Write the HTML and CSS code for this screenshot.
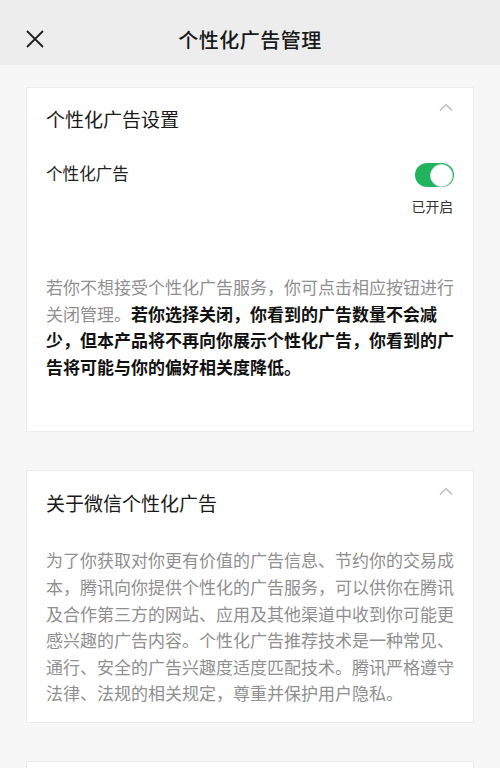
FILE: index.html
```html
<!DOCTYPE html>
<html lang="zh-CN">
<head>
<meta charset="UTF-8">
<title>个性化广告管理</title>
<link rel="stylesheet" href="styles.css">
</head>
<body>
<div class="topbar">
    <svg class="close" width="18" height="18" viewBox="0 0 18 18"><path d="M1 1L17 17M17 1L1 17" stroke="#1f1f1f" stroke-width="1.8" fill="none"/></svg>
    <h1>个性化广告管理</h1>
</div>

<div class="card first">
    <div class="card-hd">
        <h2>个性化广告设置</h2>
        <svg class="arrow" width="14" height="8" viewBox="0 0 14 8"><path d="M1 7.5L7 1.5L13 7.5" stroke="#b5b5b5" stroke-width="1.2" fill="none"/></svg>
    </div>
    <div class="row">
        <span class="label">个性化广告</span>
        <div class="state">
            <span class="switch on"><i></i></span>
            <span class="state-txt">已开启</span>
        </div>
    </div>
    <p class="desc">若你不想接受个性化广告服务，你可点击相应按钮进行关闭管理。<b>若你选择关闭，你看到的广告数量不会减少，但本产品将不再向你展示个性化广告，你看到的广告将可能与你的偏好相关度降低。</b></p>
</div>

<div class="card second">
    <div class="card-hd">
        <h2>关于微信个性化广告</h2>
        <svg class="arrow" width="14" height="8" viewBox="0 0 14 8"><path d="M1 7.5L7 1.5L13 7.5" stroke="#b5b5b5" stroke-width="1.2" fill="none"/></svg>
    </div>
    <p class="desc">为了你获取对你更有价值的广告信息、节约你的交易成本，腾讯向你提供个性化的广告服务，可以供你在腾讯及合作第三方的网站、应用及其他渠道中收到你可能更感兴趣的广告内容。个性化广告推荐技术是一种常见、通行、安全的广告兴趣度适度匹配技术。腾讯严格遵守法律、法规的相关规定，尊重并保护用户隐私。</p>
</div>

<div class="card third"></div>
</body>
</html>
```

FILE: styles.css
```css
body{margin:0;background:#f7f7f7;font-family:"Noto Sans CJK SC","Noto Sans",sans-serif;color:#1a1a1a;}
h1,h2,p{margin:0;}
.topbar{
    position:relative;
    height:65px;
    background:#ededed;
    display:flex;
    align-items:center;
    justify-content:center;
}
.topbar .close{
    position:absolute;
    left:26px;
    top:30px;
}
.topbar h1{
    font-size:20px;
    font-weight:500;
    color:#191919;
    letter-spacing:0.5px;
    margin-top:14px;
}
.card{
    margin:22px 26px 0;
    background:#fff;
    border:1px solid #ececec;
    padding:0 19px;
}
.card.first{padding-top:18px;padding-bottom:51px;}
.card.second{margin-top:38px;padding-top:19px;padding-bottom:15px;}
.card.third{margin-top:38px;height:40px;}
.card-hd{
    display:flex;
    justify-content:space-between;
    align-items:flex-start;
}
.card-hd h2{
    font-size:19px;
    font-weight:400;
    line-height:26px;
    color:#1a1a1a;
}
.card-hd .arrow{margin-top:-3px;margin-right:1px;}
.row{
    display:flex;
    justify-content:space-between;
    align-items:flex-start;
    margin-top:31px;
}
.row .label{
    font-size:16.6px;
    line-height:24px;
    color:#1f1f1f;
    margin-top:-2px;
}
.state{
    display:flex;
    flex-direction:column;
    align-items:flex-end;
}
.switch{
    display:block;
    position:relative;
    width:39px;
    height:24px;
    border-radius:12px;
    background:#22b35e;
}
.switch i{
    position:absolute;
    right:1px;
    top:1px;
    width:21px;
    height:21px;
    border:0.5px solid #c9e6d3;
    border-radius:50%;
    background:#fff;
}
.state-txt{
    font-size:13.8px;
    line-height:20px;
    color:#333;
    margin-top:9px;
    margin-right:1px;
}
.desc{
    font-size:17px;
    line-height:26.6px;
    color:#8f8f8f;
    margin-top:58px;
}
.desc b{color:#111;font-weight:700;}
.second .desc{margin-top:31px;}
```
